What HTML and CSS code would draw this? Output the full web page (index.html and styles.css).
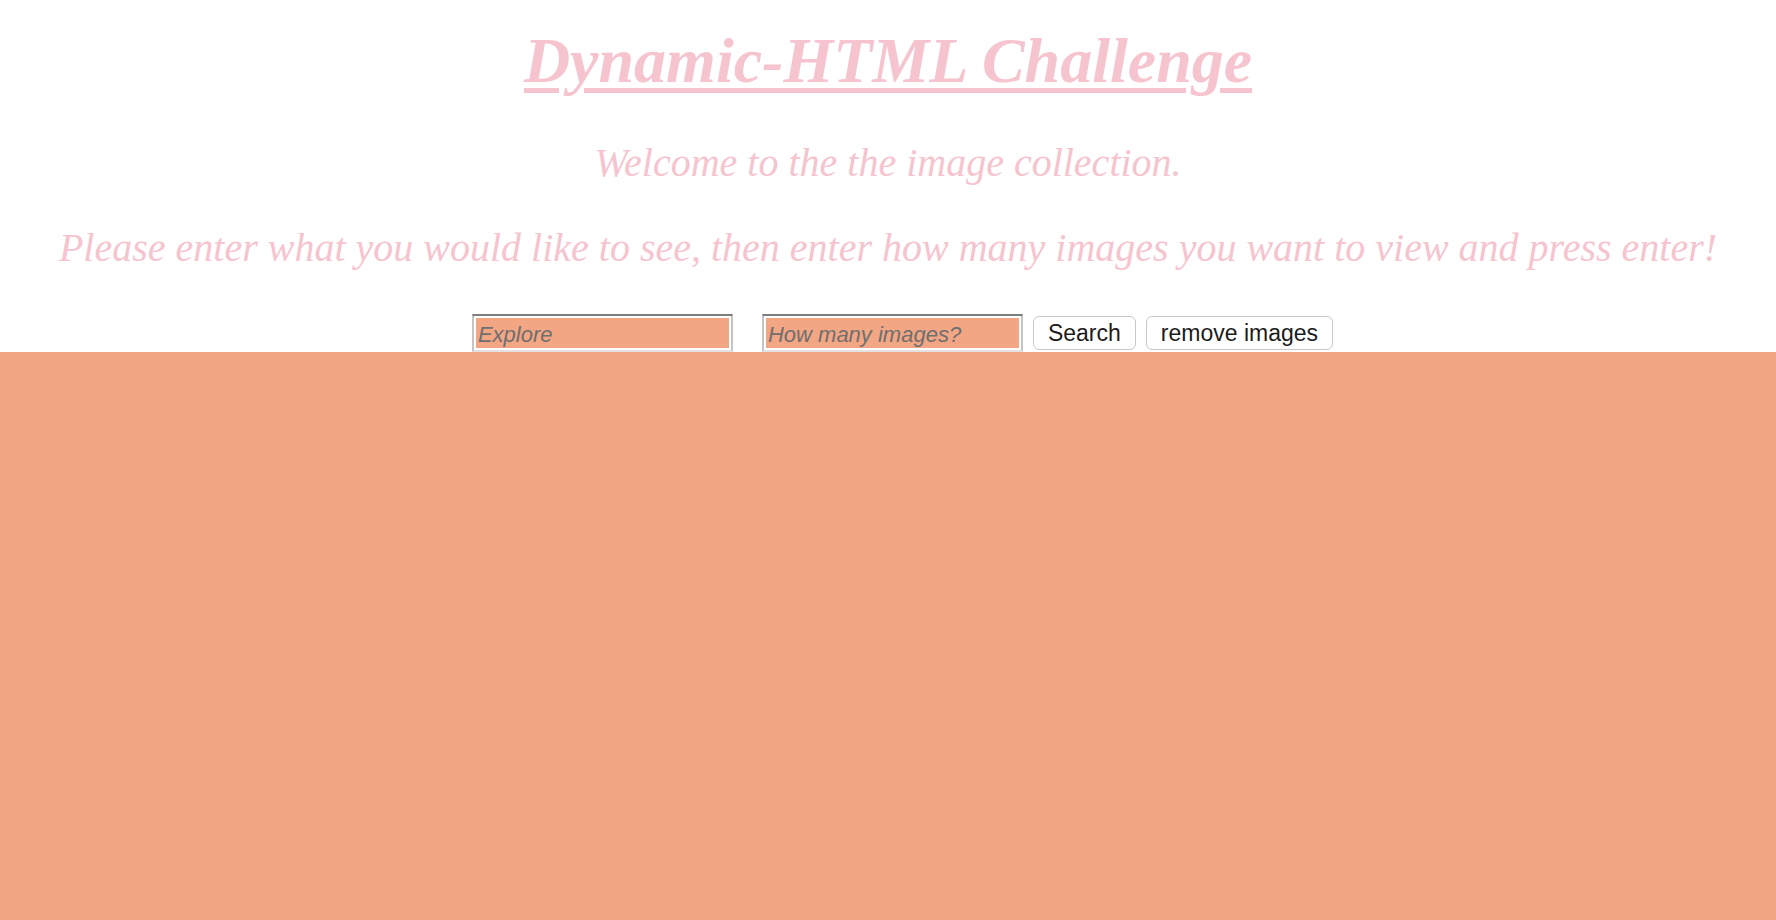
FILE: index.html
```html
<!DOCTYPE html>
<html lang="en">
<head>
    <meta charset="UTF-8">
    <meta name="viewport" content="width=device-width, initial-scale=1.0">
    <title>Dynamic-HTML Challenge</title>
    <link rel="stylesheet" href="styles.css">
</head>
<body>
    <header class="top">
        <h1 class="title">Dynamic-HTML Challenge</h1>
        <p class="intro">Welcome to the the image collection.</p>
        <p class="intro">Please enter what you would like to see, then enter how many images you want to view and press enter!</p>

        <form class="search-row" onsubmit="return false;">
            <input type="text" class="field" id="explore" placeholder="Explore">
            <input type="text" class="field" id="count" placeholder="How many images?">
            <button type="submit" class="btn">Search</button>
            <button type="button" class="btn">remove images</button>
        </form>
    </header>

    <main id="images" class="gallery"></main>
</body>
</html>
```

FILE: styles.css
```css
/* page */
html, body {
    margin: 0;
    height: 100%;
}
body {
    display: flex;
    flex-direction: column;
    background-color: #ffffff;
    font-family: "Liberation Serif", "Times New Roman", serif;
}
.top {
    text-align: center;
    background-color: #ffffff;
}
.title {
    margin: 24px 0 0;
    font-size: 64px;
    font-style: italic;
    font-weight: bold;
    line-height: 74px;
    color: #f6c4ce;
    text-decoration: underline;
    text-decoration-thickness: 5px;
    text-underline-offset: 6px;
}
.intro {
    margin: 45px 0 0;
    font-size: 40px;
    font-style: italic;
    line-height: 40px;
    color: #f6c4ce;
}
.search-row {
    display: flex;
    justify-content: center;
    align-items: flex-start;
    gap: 10px;
    margin-top: 46px;
    padding-left: 29px;
    height: 38px;
}
.field {
    box-sizing: border-box;
    width: 261px;
    height: 38px;
    padding: 2px 4px 0;
    border-style: solid;
    border-width: 3px 2px 2px;
    border-color: #7d7d7d #c4c4c4 #e2e2e2;
    outline: 2px solid #fff;
    outline-offset: -4px;
    background-color: #f3a683;
    font-family: "Liberation Sans", Arial, sans-serif;
    font-size: 22px;
    font-style: italic;
    color: #333;
}
.field::placeholder {
    color: #6f6f6f;
}
.field + .field {
    margin-left: 19px;
}
.btn {
    box-sizing: border-box;
    height: 34px;
    margin-top: 2px;
    padding: 0 14px;
    background-color: #ffffff;
    border: 1px solid #c8c8c8;
    border-radius: 6px;
    font-family: "Liberation Sans", Arial, sans-serif;
    font-size: 23px;
    color: #1c1c1c;
}
.gallery {
    flex: 1;
    background-color: #f3a683;
}
```
